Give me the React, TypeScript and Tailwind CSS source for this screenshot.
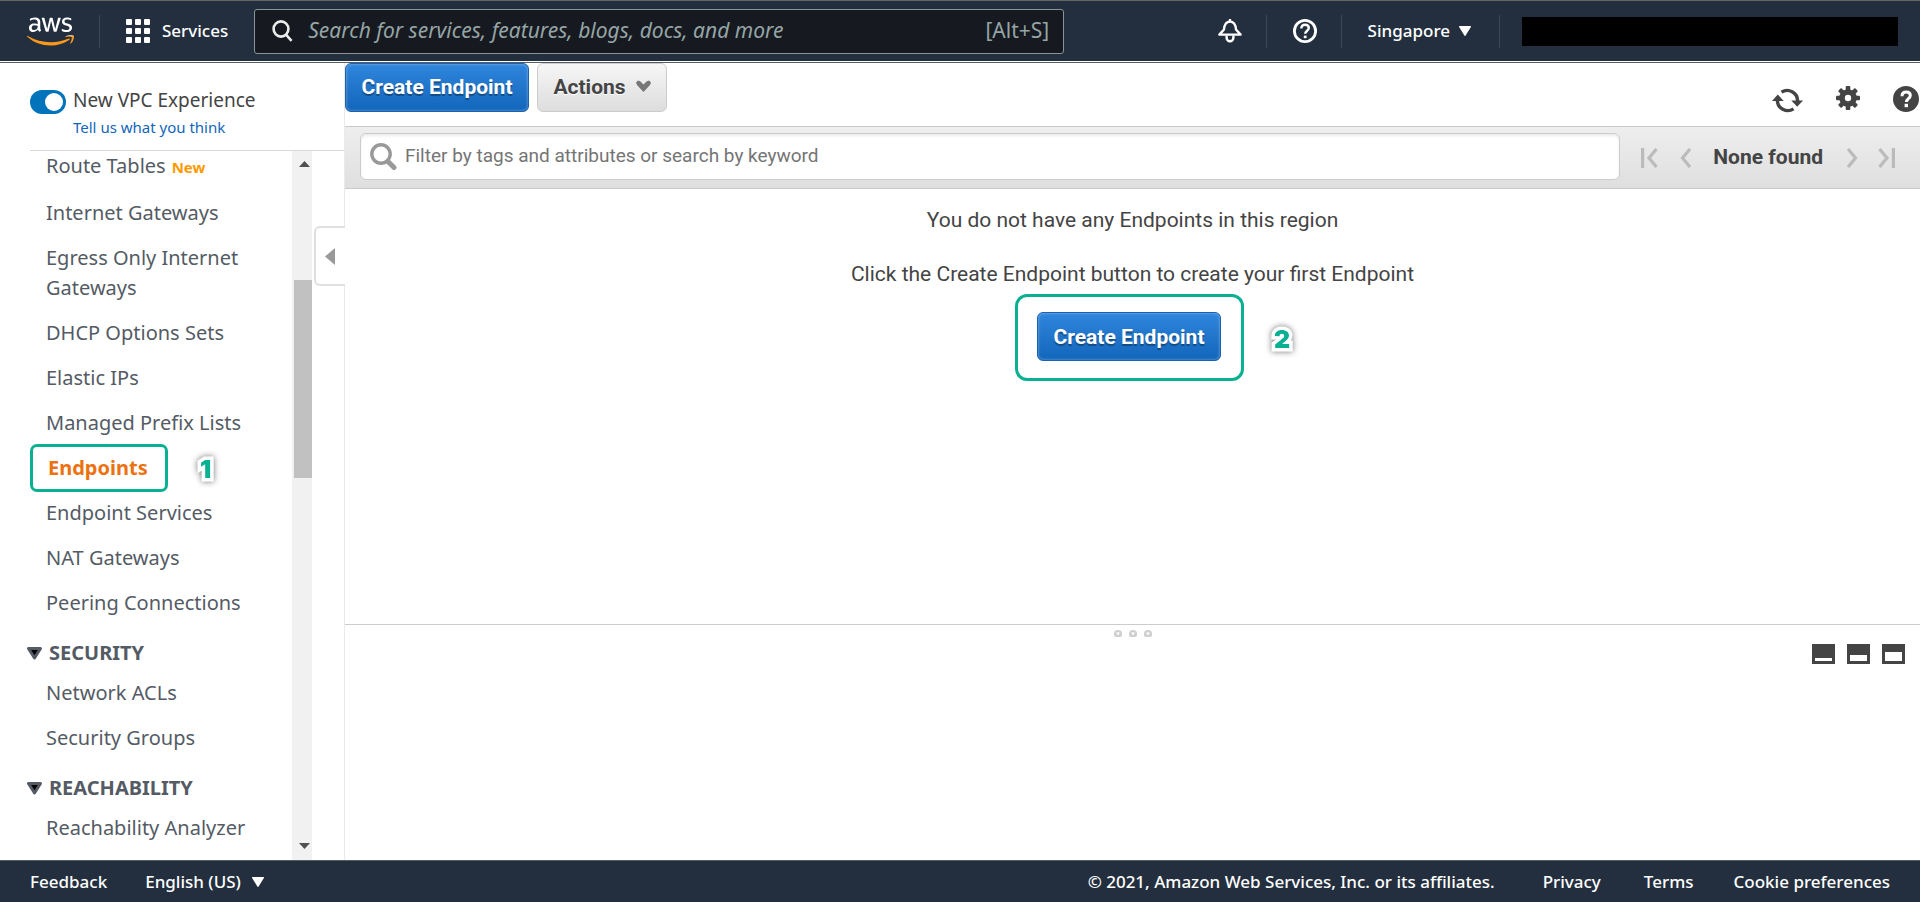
import { FaAws } from 'react-icons/fa';

function Caret({ className }: { className: string }) {
  return (
    <svg viewBox="0 0 12 10" className={className} aria-hidden="true">
      <path d="M0.6 0h10.8a.6.6 0 0 1 .5.9L6.6 9.6a.7.7 0 0 1-1.2 0L.1.9A.6.6 0 0 1 .6 0z" fill="currentColor" />
    </svg>
  );
}

function AwsLogo() {
  return (
    <a href="#home" aria-label="AWS home" className="relative block size-[47px] shrink-0">
      <FaAws className="size-[47px] text-white [clip-path:inset(0_0_40%_0)]" />
      <FaAws className="absolute inset-0 size-[47px] text-[#f8991d] [clip-path:inset(60%_0_0_0)]" />
    </a>
  );
}

function Divider() {
  return <span className="h-[33px] w-px shrink-0 bg-[#414750]" />;
}

function Header() {
  return (
    <header className="flex h-[61px] shrink-0 items-center justify-between border-t border-[#666666] bg-[#232f3e] pr-[22px] pl-[27px] font-['Noto_Sans',sans-serif] text-[17px] font-medium text-white">
      <div className="flex items-center">
        <AwsLogo />
        <span className="w-[25px]" />
        <Divider />
        <button type="button" className="ml-[26px] flex items-center gap-3">
          <svg viewBox="0 0 24 24" className="size-6" fill="currentColor" aria-hidden="true">
            {[0, 9, 18].map((y) =>
              [0, 9, 18].map((x) => <rect key={`${x}-${y}`} x={x} y={y} width="6" height="6" rx="1" />),
            )}
          </svg>
          Services
        </button>
        <label className="ml-[26px] flex h-[45px] w-[810px] items-center rounded-[3px] border border-[#879596] bg-[#16191f] pr-[14px] pl-[17px] font-normal">
          <svg viewBox="0 0 21 22" className="h-[22px] w-[21px] shrink-0 text-[#eaeded]" fill="none" stroke="currentColor" strokeWidth="2.6" aria-hidden="true">
            <ellipse cx="9" cy="9" rx="7.4" ry="7.6" />
            <path d="M14.2 14.8 19.6 20.8" />
          </svg>
          <input
            type="text"
            aria-label="Search AWS"
            placeholder="Search for services, features, blogs, docs, and more"
            className="ml-[15px] min-w-0 flex-1 bg-transparent text-[21px] italic outline-none placeholder:text-[#95a5a6]"
          />
          <span className="text-[21px] text-[#95a5a6]">[Alt+S]</span>
        </label>
      </div>
      <div className="flex items-center">
        <button type="button" aria-label="Notifications" className="mr-6">
          <svg viewBox="0 0 24 24" className="size-6" fill="none" stroke="currentColor" strokeWidth="2.4" strokeLinejoin="round" aria-hidden="true">
            <path d="M12 0v3" />
            <path d="M1.4 15.6H22.6L18 10.5C17.6 5.6 16 2.6 12 2.6S6.400 5.600 6 10.500Z" />
            <path d="M8.600 16.500v2a3.400 3.800 0 0 0 6.800 0v-2" />
          </svg>
        </button>
        <Divider />
        <button type="button" aria-label="Help" className="mr-6 ml-[26px]">
          <svg viewBox="0 0 24 24" className="size-6" fill="none" stroke="currentColor" aria-hidden="true">
            <circle cx="12" cy="12" r="10.6" strokeWidth="2.8" />
            <path d="M8.300 9.600C8.300 7 9.800 5.700 12 5.700s3.800 1.300 3.800 3.400c0 2.500-3.600 2.800-3.600 5.700" strokeWidth="2.400" />
            <path d="M12.200 16.600v2.600" strokeWidth="2.800" />
          </svg>
        </button>
        <Divider />
        <button type="button" className="mr-[28px] ml-[26px] flex items-center gap-[9px]">
          Singapore <Caret className="h-[10px] w-3" />
        </button>
        <Divider />
        <span className="ml-[22px] h-[29px] w-[376px] bg-black" />
      </div>
    </header>
  );
}

const calloutNumber =
  "absolute font-['Inter',sans-serif] text-[25px] leading-8 font-black text-[#09b192] [-webkit-text-stroke:7px_white] [paint-order:stroke_fill] drop-shadow-[0_0_3px_rgba(0,0,0,0.55)]";

function NavLink({ label }: { label: string }) {
  return (
    <li>
      <a href="#nav" className="block w-[210px]">
        {label}
      </a>
    </li>
  );
}

function NavSection({ title, links }: { title: string; links: string[] }) {
  return (
    <section className="mt-5">
      <h2 className="-ml-[19px] flex items-center gap-[7px] font-bold">
        <svg viewBox="0 0 15 13" className="h-[13px] w-[15px]" aria-hidden="true">
          <path d="M1.500 1.500h12L7.500 11z" fill="#000" stroke="#545b64" strokeWidth="3" strokeLinejoin="round" />
        </svg>
        {title}
      </h2>
      <ul className="mt-[10px] flex flex-col gap-[15px]">
        {links.map((l) => (
          <NavLink key={l} label={l} />
        ))}
      </ul>
    </section>
  );
}

function Sidebar() {
  return (
    <aside className="relative flex w-[345px] shrink-0 flex-col border-r border-[#eaeaea] font-['Noto_Sans',sans-serif]">
      <div className="ml-[30px] flex h-[88px] gap-[7px] border-b border-[#d5dbdb] pt-[23px]">
        <label htmlFor="vpc" className="relative mt-1 h-6 w-9 shrink-0">
          <input id="vpc" type="checkbox" defaultChecked className="block h-6 w-9 appearance-none rounded-full bg-[#0073bb]" />
          <span className="absolute top-[3px] right-[3px] size-[18px] rounded-full bg-white" />
        </label>
        <div className="flex flex-col gap-[3px]">
          <label htmlFor="vpc" className="text-[19px] leading-7 text-[#444444]">
            New VPC Experience
          </label>
          <a href="#feedback" className="text-[15px] leading-5 text-[#1166bb]">
            Tell us what you think
          </a>
        </div>
      </div>
      <div className="flex flex-1">
        <nav className="w-[292px] pl-[46px] text-[20px] leading-[30px] text-[#545b64]">
          <ul className="flex flex-col gap-[15px]">
            <li className="mb-px flex items-baseline gap-[6px]">
              <a href="#nav">Route Tables</a>
              <span className="text-[15px] font-bold text-[#ff9900]">New</span>
            </li>
            {['Internet Gateways', 'Egress Only Internet Gateways', 'DHCP Options Sets', 'Elastic IPs', 'Managed Prefix Lists'].map((l) => (
              <NavLink key={l} label={l} />
            ))}
            <li className="relative -my-[9px] -ml-4 w-[138px]">
              <a href="#nav" aria-current="page" className="block rounded-[7px] border-3 border-[#09b192] py-[6px] pl-[15px] font-bold text-[#ec7211]">
                Endpoints
              </a>
              <span className={`${calloutNumber} top-[9px] left-[170px]`}>1</span>
            </li>
            {['Endpoint Services', 'NAT Gateways', 'Peering Connections'].map((l) => (
              <NavLink key={l} label={l} />
            ))}
          </ul>
          <NavSection title="SECURITY" links={['Network ACLs', 'Security Groups']} />
          <NavSection title="REACHABILITY" links={['Reachability Analyzer']} />
        </nav>
        <div className="flex w-5 flex-col items-end bg-[#f1f1f1] pt-[10px] pb-2" aria-hidden="true">
          <svg viewBox="0 0 11 6" className="mr-[2px] h-[6px] w-[11px] text-[#505050]">
            <path d="M0 6 5.500 0 11 6z" fill="currentColor" />
          </svg>
          <div className="mt-[113px] h-[198px] w-[18px] bg-[#c1c1c1]" />
          <svg viewBox="0 0 11 6" className="mt-auto mr-[2px] mb-[3px] h-[6px] w-[11px] text-[#505050]">
            <path d="M0 0h11L5.500 6z" fill="currentColor" />
          </svg>
        </div>
      </div>
      <button
        type="button"
        aria-label="Collapse navigation"
        className="absolute top-[163px] -right-px flex h-[60px] w-[31px] items-center rounded-l-[6px] border-2 border-r-0 border-[#e0e0e0] bg-white pl-[9px]"
      >
        <svg viewBox="0 0 10 17" className="h-[17px] w-[10px]" aria-hidden="true">
          <path d="M10 0v17L0 8.500z" fill="#999999" />
        </svg>
      </button>
    </aside>
  );
}

function CreateButton() {
  return (
    <button
      type="button"
      className="h-[49px] w-[184px] rounded-[6px] border border-[#1a62b0] bg-linear-to-b from-[#2f86dc] to-[#1166bb] text-[21px] font-bold text-white inset-shadow-[0_0_3px_rgba(255,255,255,0.45)] [text-shadow:0_2px_1px_rgba(0,0,0,0.35)]"
    >
      Create Endpoint
    </button>
  );
}

function Toolbar() {
  return (
    <div className="flex h-[63px] items-start justify-between">
      <div className="flex gap-2">
        <CreateButton />
        <button
          type="button"
          className="flex h-[49px] w-[130px] items-center justify-center gap-[10px] rounded-[6px] border border-[#cccccc] bg-linear-to-b from-[#f6f6f6] to-[#dddddd] text-[21px] font-bold [text-shadow:0_1px_0_white]"
        >
          Actions
          <svg viewBox="0 0 15 12" className="-mt-1 h-3 w-[15px]" aria-hidden="true">
            <path d="M0 2.500 2 .5 4.500 1.500 7.500 4.500 10.500 1.500 13 .5 15 2.500 14 5 7.500 12 1 5z" fill="#777777" />
          </svg>
        </button>
      </div>
      <div className="flex items-start gap-[33px] pt-[23px] pr-px text-[#444444]">
        <button type="button" aria-label="Refresh">
          <svg viewBox="0 0 31 25" className="mt-[2px] h-[25px] w-[31px]" fill="none" aria-hidden="true">
            <path d="M9.500 4.200A10.400 10.400 0 0 1 25.600 13" stroke="currentColor" strokeWidth="3.400" />
            <path d="M21.500 20.800A10.400 10.400 0 0 1 5.400 12" stroke="currentColor" strokeWidth="3.400" />
            <path d="M19.300 12.500H31L25.200 18.800z" fill="currentColor" />
            <path d="M0 13h11.700L5.800 6.600z" fill="currentColor" />
          </svg>
        </button>
        <button type="button" aria-label="Settings">
          <svg viewBox="0 0 24 24" className="size-6" aria-hidden="true">
            <g fill="currentColor">
              {[0, 45, 90, 135].map((a) => (
                <rect key={a} x="9.700" y="0" width="4.600" height="24" rx="1" transform={`rotate(${a} 12 12)`} />
              ))}
              <circle cx="12" cy="12" r="8.800" />
            </g>
            <circle cx="12" cy="12" r="3.200" fill="#ffffff" />
          </svg>
        </button>
        <button type="button" aria-label="Page help">
          <svg viewBox="0 0 26 26" className="size-[26px]" fill="none" aria-hidden="true">
            <circle cx="13" cy="13" r="13" fill="currentColor" />
            <path d="M9 10.300c0-2.800 1.700-4.200 4.200-4.200s4.100 1.300 4.100 3.500c0 3-3.900 3.200-3.900 6.400" stroke="#ffffff" strokeWidth="3" />
            <path d="M13.300 17.800v3.400" stroke="#ffffff" strokeWidth="3.400" />
          </svg>
        </button>
      </div>
    </div>
  );
}

function PagerButton({ label, d, bar, wide }: { label: string; d: string; bar?: string; wide?: boolean }) {
  return (
    <button type="button" aria-label={label} className="text-[#bbbbbb]">
      <svg viewBox={wide ? '0 0 17 20' : '0 0 11 20'} className={wide ? 'h-5 w-[17px]' : 'h-5 w-[11px]'} fill="none" stroke="currentColor" strokeWidth="3.200" aria-hidden="true">
        <path d={d} />
        {bar && <path d={bar} />}
      </svg>
    </button>
  );
}

function FilterBar() {
  return (
    <div className="flex h-[63px] items-start border-y border-[#c9c9c9] bg-linear-to-b from-[#eeeeee] to-[#dfdfdf] pt-[6px] pr-[25px] pl-[15px]">
      <label className="flex h-[47px] flex-1 items-center rounded-[6px] border border-[#cccccc] bg-white pl-[9px] inset-shadow-[0_2px_3px_rgba(0,0,0,0.08)]">
        <svg viewBox="0 0 27 27" className="size-[27px] text-[#999999]" fill="none" stroke="currentColor" aria-hidden="true">
          <circle cx="11" cy="11" r="9.200" strokeWidth="3.400" />
          <path d="M18 18.500 24 24.500" strokeWidth="5" strokeLinecap="round" />
        </svg>
        <input
          type="text"
          aria-label="Filter endpoints"
          placeholder="Filter by tags and attributes or search by keyword"
          className="ml-2 min-w-0 flex-1 bg-transparent text-[19px] outline-none placeholder:text-[#757575]"
        />
      </label>
      <div className="ml-[21px] flex h-[49px] items-center">
        <PagerButton label="First page" wide d="M15.500 1 8 10l7.500 9" bar="M1.600 0v20" />
        <span className="w-[22px]" />
        <PagerButton label="Previous page" d="M10 1 2.500 10 10 19" />
        <span className="mr-6 ml-[22px] text-[21px] font-bold">None found</span>
        <PagerButton label="Next page" d="M1 1 8.500 10 1 19" />
        <span className="w-5" />
        <PagerButton label="Last page" wide d="M1.500 1 9 10l-7.500 9" bar="M15.400 0v20" />
      </div>
    </div>
  );
}

function LayoutButton({ label, y }: { label: string; y: number }) {
  return (
    <button type="button" aria-label={label}>
      <svg viewBox="0 0 23 20" className="h-5 w-[23px]" aria-hidden="true">
        <rect width="23" height="20" fill="#444444" />
        <rect x="3" y={y} width="17" height={17 - y} fill="#ffffff" />
      </svg>
    </button>
  );
}

function Main() {
  return (
    <main className="flex min-w-0 flex-1 flex-col font-['Roboto',sans-serif] text-[#444444]">
      <Toolbar />
      <FilterBar />
      <section className="flex h-[435px] flex-col items-center pt-4 text-[21px] leading-[30px]">
        <p>You do not have any Endpoints in this region</p>
        <p className="mt-6">Click the Create Endpoint button to create your first Endpoint</p>
        <div className="relative mt-[5px] mr-[6px] rounded-[12px] border-3 border-[#09b192] pt-[15px] pr-5 pb-[17px] pl-[19px]">
          <CreateButton />
          <span className={`${calloutNumber} top-[26px] left-[256px]`}>2</span>
        </div>
      </section>
      <section className="flex-1 border-t border-[#cccccc]">
        <svg viewBox="0 0 38 7" className="mx-auto mt-[5px] h-[7px] w-[38px]" aria-hidden="true">
          {[0, 15, 30].map((x) => (
            <g key={x}>
              <path d={`M${x} 6V3.500a4 3.500 0 0 1 8 0V6l-2 1h-4z`} fill="#cfcfcf" />
              <path d={`M${x + 2} 2.500h4L${x + 4} 5.500z`} fill="#ffffff" />
            </g>
          ))}
        </svg>
        <div className="mt-[7px] flex justify-end gap-3 pr-[15px]">
          <LayoutButton label="Minimise details" y={14} />
          <LayoutButton label="Split details" y={11} />
          <LayoutButton label="Maximise details" y={8} />
        </div>
      </section>
    </main>
  );
}

function Footer() {
  return (
    <footer className="flex h-[42px] shrink-0 items-center justify-between border-t border-[#545b64] bg-[#232f3e] px-[30px] font-['Noto_Sans',sans-serif] text-[17px] font-medium text-white">
      <div className="flex items-center gap-[38px]">
        <a href="#feedback">Feedback</a>
        <button type="button" className="flex items-center gap-[11px]">
          English (US) <Caret className="h-[10px] w-3" />
        </button>
      </div>
      <div className="flex items-center">
        <p>© 2021, Amazon Web Services, Inc. or its affiliates.</p>
        <a href="#privacy" className="ml-12">Privacy</a>
        <a href="#terms" className="ml-[43px]">Terms</a>
        <a href="#cookies" className="ml-10">Cookie preferences</a>
      </div>
    </footer>
  );
}

export default function App() {
  return (
    <div className="flex min-h-screen flex-col bg-white">
      <Header />
      <div className="mt-px flex flex-1 border-t border-[#545b64]">
        <Sidebar />
        <Main />
      </div>
      <Footer />
    </div>
  );
}
